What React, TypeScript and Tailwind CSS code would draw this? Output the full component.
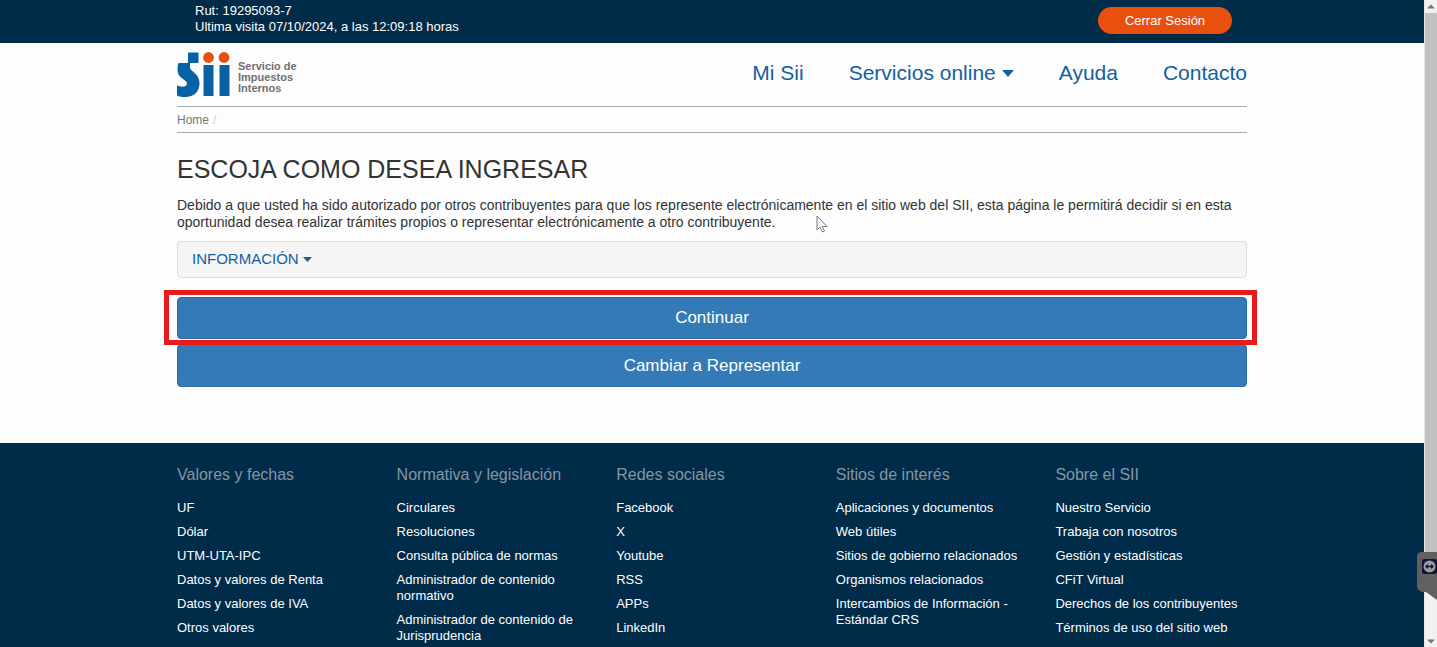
import React, { useState } from 'react'
import { FaCaretDown } from 'react-icons/fa'

const menu = ['Mi Sii', 'Servicios online', 'Ayuda', 'Contacto']

const footerColumns = [
    {
        title: 'Valores y fechas',
        links: ['UF', 'Dólar', 'UTM-UTA-IPC', 'Datos y valores de Renta', 'Datos y valores de IVA', 'Otros valores'],
    },
    {
        title: 'Normativa y legislación',
        links: [
            'Circulares',
            'Resoluciones',
            'Consulta pública de normas',
            'Administrador de contenido normativo',
            'Administrador de contenido de Jurisprudencia',
        ],
    },
    {
        title: 'Redes sociales',
        links: ['Facebook', 'X', 'Youtube', 'RSS', 'APPs', 'LinkedIn'],
    },
    {
        title: 'Sitios de interés',
        links: [
            'Aplicaciones y documentos',
            'Web útiles',
            'Sitios de gobierno relacionados',
            'Organismos relacionados',
            'Intercambios de Información - Estándar CRS',
        ],
    },
    {
        title: 'Sobre el SII',
        links: [
            'Nuestro Servicio',
            'Trabaja con nosotros',
            'Gestión y estadísticas',
            'CFiT Virtual',
            'Derechos de los contribuyentes',
            'Términos de uso del sitio web',
        ],
    },
]

const App = () => {
    const [openInfo, setOpenInfo] = useState(false)
    return (
        <div className="relative flex min-h-screen bg-[#fdfdfd] font-['Liberation_Sans',Arial,sans-serif] text-[#333]">
            <div className="flex min-w-0 flex-1 flex-col">
                <TopBar />
                <div className="mx-auto w-full max-w-[1070px]">
                    <Header />
                    <nav aria-label="Ruta" className="flex h-[26px] items-center gap-1 border-b border-[#aaa] text-xs text-[#777]">
                        <a href="#home">Home</a>
                        <span className="text-[#ccc]">/</span>
                    </nav>
                    <main className="pt-5 pb-14">
                        <h1 className="text-[25px] leading-8">ESCOJA COMO DESEA INGRESAR</h1>
                        <p className="mt-3 text-sm leading-[17px]">
                            Debido a que usted ha sido autorizado por otros contribuyentes para que los represente
                            electrónicamente en el sitio web del SII, esta página le permitirá decidir si en esta
                            oportunidad desea realizar trámites propios o representar electrónicamente a otro contribuyente.
                        </p>
                        <div className="mt-[10px] rounded-sm border border-[#ddd] bg-[#f5f5f5]">
                            <button
                                type="button"
                                className="flex h-[35px] items-center gap-1 px-[14px] text-[15px] text-[#12619f]"
                                aria-expanded={openInfo}
                                onClick={() => setOpenInfo(!openInfo)}
                            >
                                INFORMACIÓN
                                <Caret className="h-[5px] w-[9px]" />
                            </button>
                        </div>
                        <div className="mt-[19px] flex flex-col gap-[5px]">
                            <div className="relative">
                                <button type="button" className="h-[42px] w-full rounded-sm border border-[#2e6da4] bg-[#337ab7] text-[17px] text-white">
                                    Continuar
                                </button>
                                <div className="pointer-events-none absolute -top-[7px] -right-[10px] -bottom-[6px] -left-[13px] border-5 border-[#e81a1c]" />
                            </div>
                            <button type="button" className="h-[43px] w-full rounded-sm border border-[#2e6da4] bg-[#337ab7] text-[17px] text-white">
                                Cambiar a Representar
                            </button>
                        </div>
                    </main>
                </div>
                <Footer />
            </div>
            <ScrollTrack />
            <Pointer className="absolute top-[215px] left-[816px] h-[18px] w-3" />
            <SideTab className="absolute top-[552px] right-0 h-12 w-5" />
        </div>
    )
}
export default App

const TopBar = () => {
    return (
        <div className="bg-[#002b49] text-white">
            <div className="mx-auto flex h-[43px] w-full max-w-[1070px] items-start justify-between pt-[3px] pr-[15px] pl-[18px] text-[13px]">
                <div className="leading-4">
                    <p>Rut: 19295093-7</p>
                    <p>Ultima visita 07/10/2024, a las 12:09:18 horas</p>
                </div>
                <button type="button" className="mt-1 h-[27px] w-[134px] rounded-full bg-[#e9500e]">
                    Cerrar Sesión
                </button>
            </div>
        </div>
    )
}

const Header = () => {
    return (
        <header className="flex h-16 items-center justify-between border-b border-[#aaa]">
            <a href="#inicio" className="flex items-center gap-2">
                <Logo className="h-[45px] w-[53px]" />
                <span className="flex flex-col pt-[6px] text-[11px] leading-[11px] font-bold text-[#707070]">
                    <span>Servicio de</span>
                    <span>Impuestos</span>
                    <span>Internos</span>
                </span>
            </a>
            <nav aria-label="Principal" className="flex items-center gap-[45px] pb-[3px] text-[21px] text-[#12619f]">
                {menu.map((item) => (
                    <a key={item} href="#menu" className="flex items-center gap-[6px]">
                        {item}
                        {item === 'Servicios online' ? <Caret className="h-[7px] w-3" /> : ''}
                    </a>
                ))}
            </nav>
        </header>
    )
}

const Footer = () => {
    return (
        <footer className="flex-1 bg-[#002b49] pt-[22px]">
            <div className="mx-auto grid w-full max-w-[1070px] grid-cols-5 gap-7">
                {footerColumns.map((column) => (
                    <div key={column.title}>
                        <h2 className="text-base leading-5 text-[#8596a3]">{column.title}</h2>
                        <ul className="mt-[15px] flex flex-col gap-2 text-[13px] leading-4 text-white">
                            {column.links.map((link) => (
                                <li key={link}>
                                    <a href="#enlace">{link}</a>
                                </li>
                            ))}
                        </ul>
                    </div>
                ))}
            </div>
        </footer>
    )
}

const ScrollTrack = () => {
    return (
        <div className="flex w-[13px] shrink-0 flex-col items-center border-l border-[#e4e8ea] bg-[#f1f1f1] text-[#777]">
            <div className="flex h-[13px] items-center">
                <FaCaretDown className="h-3 w-3 rotate-180" />
            </div>
            <div className="w-full flex-1 bg-[#c1c1c1]" />
            <div className="flex h-[62px] items-end">
                <FaCaretDown className="h-3 w-3" />
            </div>
        </div>
    )
}

function Caret(props: any) {
    return (
        <svg {...props} viewBox="0 0 12 7" preserveAspectRatio="none" fill="currentColor">
            <path d="M0 0h12L6 7z" />
        </svg>
    )
}

function Logo(props: any) {
    return (
        <svg {...props} viewBox="0 0 53 45">
            <g fill="#0662a5">
                <path d="M11 0.500h10.500v10.500H11z" />
                <path d="M1.500 11H13v4c0 5 9.500 6 9.500 16 0 9-6 14-14 14-3.500 0-6.500-.5-8.500-1.500V33.500c4 2 10 1.500 10-2 0-4-9.500-5-9.500-13.500 0-3 .3-5 1-7z" />
                <path d="M26.500 13h10v31h-10zM42.500 13h10v31h-10z" />
            </g>
            <g fill="#e9500e">
                <circle cx="31.500" cy="5.500" r="5.400" />
                <circle cx="47" cy="5.500" r="5.400" />
            </g>
        </svg>
    )
}

function Pointer(props: any) {
    return (
        <svg {...props} viewBox="0 0 12 18" fill="#fff" stroke="#777" strokeWidth="1" strokeLinejoin="round">
            <path d="M1 1v14l3-3 2.500 5 2-1-2.300-4.500H11z" />
        </svg>
    )
}

function SideTab(props: any) {
    return (
        <svg {...props} viewBox="0 0 20 48">
            <path d="M5 0h15v48L9 40H6q-6-1-6-6V5q0-5 5-5z" fill="#606060" />
            <rect x="5" y="7" width="15" height="15" rx="2" fill="#12123a" />
            <circle cx="12.500" cy="14.500" r="6" fill="#9a9a9a" />
            <path d="M8 14.500l3-2.500v1.700h3V12l3 2.500-3 2.500v-1.700h-3V17z" fill="#12123a" />
        </svg>
    )
}
